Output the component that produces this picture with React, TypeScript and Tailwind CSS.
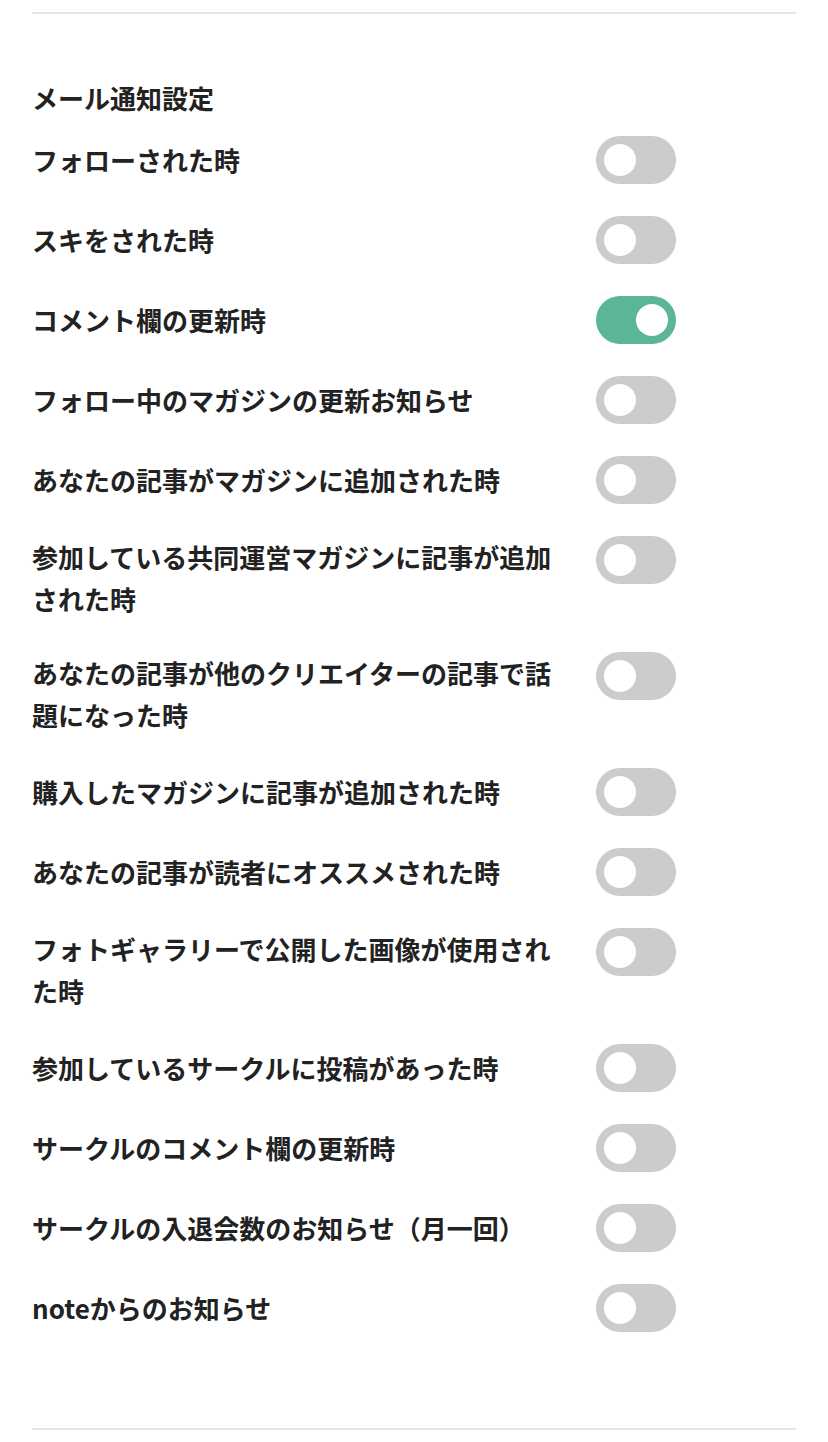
import React from 'react';

interface Setting {
  label: string;
  on: boolean;
}

const settings: Setting[] = [
  { label: 'フォローされた時', on: false },
  { label: 'スキをされた時', on: false },
  { label: 'コメント欄の更新時', on: true },
  { label: 'フォロー中のマガジンの更新お知らせ', on: false },
  { label: 'あなたの記事がマガジンに追加された時', on: false },
  { label: '参加している共同運営マガジンに記事が追加された時', on: false },
  { label: 'あなたの記事が他のクリエイターの記事で話題になった時', on: false },
  { label: '購入したマガジンに記事が追加された時', on: false },
  { label: 'あなたの記事が読者にオススメされた時', on: false },
  { label: 'フォトギャラリーで公開した画像が使用された時', on: false },
  { label: '参加しているサークルに投稿があった時', on: false },
  { label: 'サークルのコメント欄の更新時', on: false },
  { label: 'サークルの入退会数のお知らせ（月一回）', on: false },
  { label: 'noteからのお知らせ', on: false },
];

const Toggle = ({ on }: { on: boolean }) => (
  <div
    className={
      on
        ? 'ml-[32px] flex h-[48px] w-[80px] shrink-0 items-center justify-end rounded-full bg-[#5bb597] px-[8px]'
        : 'ml-[32px] flex h-[48px] w-[80px] shrink-0 items-center justify-start rounded-full bg-[#cccccc] px-[8px]'
    }
  >
    <div className="h-[32px] w-[32px] rounded-full bg-white" />
  </div>
);

export default function App() {
  return (
    <div
      className="min-h-[1442px] bg-white px-[32px] pt-[12px] text-[#222222]"
      style={{ fontFamily: '"Noto Sans CJK JP", "Noto Sans", sans-serif' }}
    >
      <div className="h-[2px] w-full bg-[#e6e6e6]" />
      <section className="pt-[63px] pb-[96px]">
        <h2 className="mb-[17px] text-[26px] font-bold leading-[42px]">メール通知設定</h2>
        <div className="flex flex-col gap-[32px]">
          {settings.map((s) => (
            <div key={s.label} className="flex items-start">
              <p className="w-[532px] self-center text-[26px] font-semibold leading-[42px]">{s.label}</p>
              <Toggle on={s.on} />
            </div>
          ))}
        </div>
      </section>
      <div className="h-[2px] w-full bg-[#e6e6e6]" />
    </div>
  );
}
